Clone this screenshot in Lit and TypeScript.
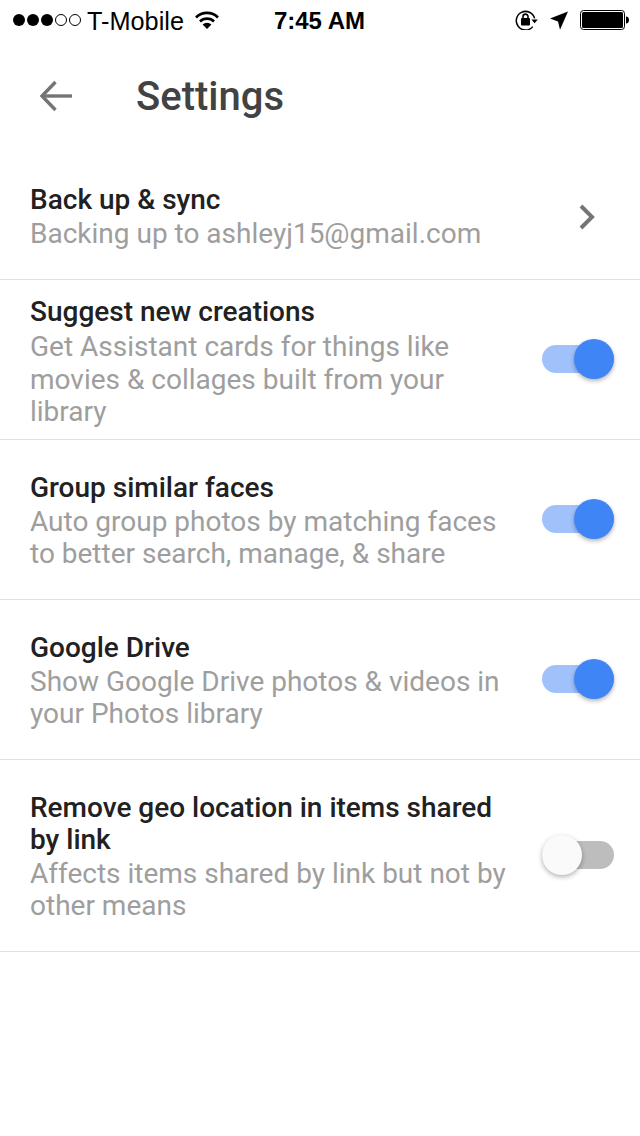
import { LitElement, html, css, svg } from 'lit';
import { customElement, property } from 'lit/decorators.js';

@customElement('md-toggle')
export class MdToggle extends LitElement {
  static styles = css`
    :host {
      display: block;
      position: relative;
      width: 72px;
      height: 40px;
    }
    .track {
      position: absolute;
      left: 0;
      top: 6px;
      width: 72px;
      height: 28px;
      border-radius: 14px;
      background: #a0c1f9;
    }
    .knob {
      position: absolute;
      right: 0;
      top: 0;
      width: 40px;
      height: 40px;
      border-radius: 50%;
      background: #3f85f6;
      box-shadow: 0 2px 4px rgba(0, 0, 0, 0.3);
    }
    :host(:not([on])) .track {
      background: #bdbdbd;
    }
    :host(:not([on])) .knob {
      right: auto;
      left: 0;
      background: #fafafa;
      box-shadow: 0 2px 5px rgba(0, 0, 0, 0.3);
    }
  `;

  @property({ type: Boolean, reflect: true }) on = false;

  render() {
    return html`<div class="track"></div><div class="knob"></div>`;
  }
}

const rows = [
  { title: ['Suggest new creations'], sub: ['Get Assistant cards for things like', 'movies & collages built from your', 'library'], on: true, pad: 'tight' },
  { title: ['Group similar faces'], sub: ['Auto group photos by matching faces', 'to better search, manage, & share'], on: true, pad: '' },
  { title: ['Google Drive'], sub: ['Show Google Drive photos & videos in', 'your Photos library'], on: true, pad: '' },
  { title: ['Remove geo location in items shared', 'by link'], sub: ['Affects items shared by link but not by', 'other means'], on: false, pad: '' },
];

@customElement('app-root')
export class AppRoot extends LitElement {
  static styles = css`
    :host {
      display: block;
      width: 640px;
      height: 1136px;
      background: #fff;
      overflow: hidden;
      font-family: Roboto, sans-serif;
    }

    .status {
      display: grid;
      grid-template-columns: 1fr auto 1fr;
      align-items: center;
      height: 40px;
      padding: 0 11px 0 13px;
      box-sizing: border-box;
      color: #000;
      font-family: 'Liberation Sans', Arial, sans-serif;
    }
    .status .left,
    .status .right {
      display: flex;
      align-items: center;
    }
    .status .right {
      justify-content: flex-end;
      gap: 12px;
    }
    .dots {
      display: flex;
      gap: 2px;
    }
    .dots svg {
      display: block;
    }
    .carrier {
      font-size: 25.3px;
      margin: 0 11px 0 6px;
      padding-top: 2px;
    }
    .time {
      font-size: 24px;
      font-weight: bold;
      margin-right: 3px;
      padding-top: 2px;
    }

    .bar {
      display: flex;
      align-items: center;
      height: 112px;
      padding-left: 36px;
    }
    .bar svg {
      display: block;
    }
    h1 {
      margin: 0 0 0 60px;
      font-size: 40px;
      font-weight: 500;
      color: #424242;
    }

    .row {
      display: flex;
      align-items: center;
      justify-content: space-between;
      padding: 32px 26px 29px 30px;
      border-bottom: 1px solid #e0e0e0;
    }
    .row.first {
      padding-right: 44px;
    }
    .row.tight {
      padding-top: 16px;
      padding-bottom: 10.5px;
    }
    .title {
      font-size: 28px;
      font-weight: 500;
      line-height: 32px;
      color: #212121;
    }
    .sub {
      font-size: 28px;
      line-height: 32px;
      color: #9e9e9e;
      margin-top: 2px;
    }
    .tight .sub {
      line-height: 32.5px;
      margin-top: 3px;
    }
    .title span,
    .sub span {
      display: block;
      white-space: nowrap;
    }
    md-toggle {
      flex: none;
      margin-bottom: 4px;
    }
    .tight md-toggle {
      margin-bottom: 6px;
    }
  `;

  private dot(filled: boolean) {
    return svg`<svg width="12" height="12" viewBox="0 0 12 12"><circle cx="6" cy="6" r=${filled ? 6 : 5.5} fill=${filled ? '#000' : 'none'} stroke="#000" stroke-width=${filled ? 0 : 1}></circle></svg>`;
  }

  private statusBar() {
    return html`<div class="status">
      <div class="left">
        <div class="dots">${[1, 1, 1, 0, 0].map((d) => this.dot(d === 1))}</div>
        <span class="carrier">T-Mobile</span>
        <svg width="24" height="18" viewBox="0 0 24 18">
          <path d="M1 6.5a15.5 15.5 0 0 1 22 0" fill="none" stroke="#000" stroke-width="2.6" />
          <path d="M5 10.5a10 10 0 0 1 14 0" fill="none" stroke="#000" stroke-width="2.6" />
          <path d="M7.6 13.6a6.2 6.2 0 0 1 8.8 0L12 18Z" />
        </svg>
      </div>
      <span class="time">7:45 AM</span>
      <div class="right">
        <svg width="23" height="20" viewBox="0 0 23 20">
          <path d="M17.8 16.6A9.3 9.3 0 1 1 19.6 8.4" fill="none" stroke="#000" stroke-width="1.5" />
          <path d="M16.4 9.4h6.4l-3.2 3.8Z" />
          <rect x="6" y="8" width="9" height="7.4" rx="1" />
          <path d="M8 8.5V6.6a2.5 2.5 0 0 1 5 0v1.9" fill="none" stroke="#000" stroke-width="1.6" />
        </svg>
        <svg width="18" height="19" viewBox="0 0 18 19">
          <path d="M18 .5 10 18.8 8 10.4 0 7.6Z" />
        </svg>
        <svg width="49" height="20" viewBox="0 0 49 20">
          <rect x=".5" y=".5" width="44" height="19" rx="3" fill="none" stroke="#000" />
          <rect x="2" y="2" width="41" height="16" rx="1.5" />
          <path d="M46 6.5c2 .2 3 1.6 3 3.5s-1 3.3-3 3.5Z" />
        </svg>
      </div>
    </div>`;
  }

  render() {
    return html`
      ${this.statusBar()}
      <div class="bar">
        <svg width="40" height="40" viewBox="0 0 40 40" fill="none" stroke="#757575" stroke-width="3.4">
          <path d="M36 20H6" />
          <path d="M19.5 6 6 20 19.5 34" />
        </svg>
        <h1>Settings</h1>
      </div>
      <div class="row first">
        <div>
          <div class="title"><span>Back up &amp; sync</span></div>
          <div class="sub"><span>Backing up to ashleyj15@gmail.com</span></div>
        </div>
        <svg width="18" height="26" viewBox="0 0 18 26" fill="none" stroke="#757575" stroke-width="4">
          <path d="M3 2 14 13 3 24" />
        </svg>
      </div>
      ${rows.map(
        (r) => html`<div class="row ${r.pad}">
          <div>
            <div class="title">${r.title.map((t) => html`<span>${t}</span>`)}</div>
            <div class="sub">${r.sub.map((t) => html`<span>${t}</span>`)}</div>
          </div>
          <md-toggle ?on=${r.on}></md-toggle>
        </div>`,
      )}
    `;
  }
}
